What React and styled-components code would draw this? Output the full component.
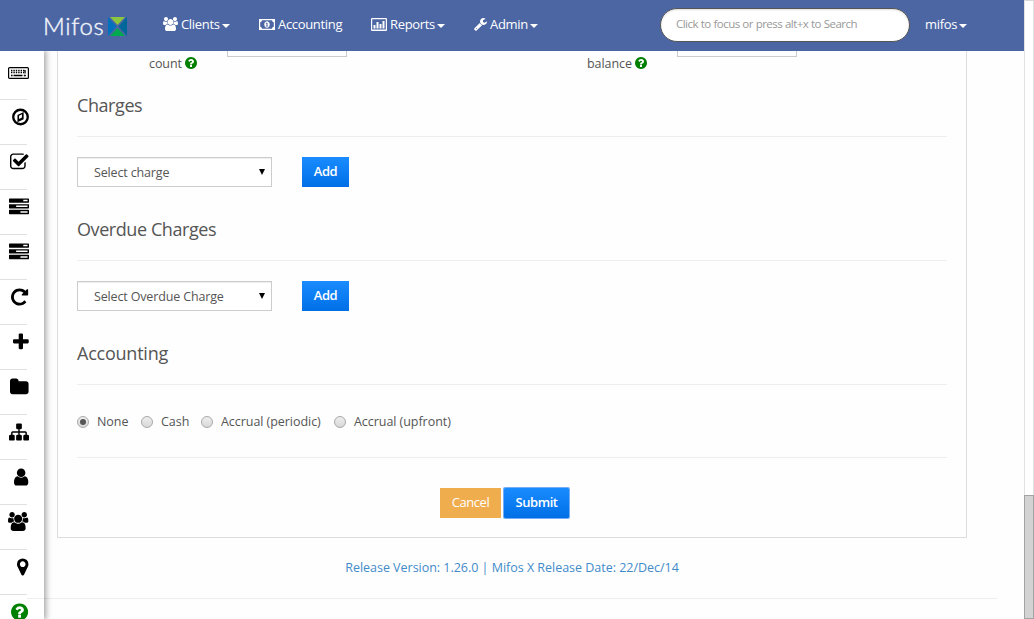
import React from "react";
import styled, { createGlobalStyle } from "styled-components";

const Global = createGlobalStyle`
  * { box-sizing: border-box; }
  body { margin: 0; background: #fefefe; overflow: hidden; }
  #root { font-family: "Open Sans", "Noto Sans", sans-serif; font-size: 12.5px; font-stretch: 88%; letter-spacing: -0.05px; color: #555; }
`;

const Page = styled.div`
  display: flex;
  width: 1034px;
  height: 619px;
  overflow: hidden;
`;
const Screen = styled.div`
  display: flex;
  flex-direction: column;
  width: 1024px;
`;
const Scrollbar = styled.div`
  display: flex;
  align-items: flex-end;
  width: 10px;
  background: #fff;
  border-left: 1px solid #e2e2e2;
  border-right: 1px solid #e2e2e2;
  border-top: 1px solid #d8d8d8;
`;
const Thumb = styled.div`
  width: 10px;
  height: 124px;
  flex: none;
  margin-left: -1px;
  background: #d3d3d3;
  border: 1px solid #a3a3a3;
`;

const Navbar = styled.header`
  display: flex;
  align-items: center;
  height: 51px;
  flex: none;
  padding-left: 44px;
  background: #4c66a4;
  color: #fff;
`;
const Brand = styled.div`
  display: flex;
  align-items: center;
  width: 119px;
  height: 51px;
  padding-top: 2px;
`;
const BrandName = styled.span`
  width: 65px;
  margin-left: -1px;
  padding-bottom: 1px;
  font: 300 24px/30px Lato, sans-serif;
  letter-spacing: 0.6px;
  color: #f1f4fa;
  -webkit-text-stroke: 0.4px #f1f4fa;
`;
const NavItem = styled.a`
  display: flex;
  align-items: center;
  width: ${(p) => p.$w}px;
  height: 51px;
  padding-bottom: 3px;
  font-size: 13px;
  white-space: nowrap;
  letter-spacing: -0.32px;
`;
const NavIcon = styled.span`
  display: flex;
  align-items: center;
  margin-right: 3px;
`;
const Caret = styled.i`
  margin: 4px 0 0 2px;
  border: 4px solid transparent;
  border-top-color: #fff;
  border-bottom: 0;
`;
const Search = styled.div`
  width: 250px;
  height: 34px;
  margin: 0 15px 1px 0;
  padding-left: 15px;
  border: 1px solid #555;
  border-radius: 17px;
  background: #fff;
  box-shadow: inset 0 1px 2px #ddd;
  color: #999;
  font-size: 11.5px;
  letter-spacing: -0.53px;
  word-spacing: 0.3px;
  line-height: 29px;
  white-space: nowrap;
`;

const Body = styled.div`
  display: flex;
  flex: 1;
  min-height: 0;
`;
const Sidebar = styled.nav`
  width: 44px;
  flex: none;
  background: #fff;
  box-shadow: 1px 0 6px 1px rgba(0, 0, 0, 0.36);
  clip-path: inset(0 -12px 0 0);
`;
const SideItem = styled.a`
  display: flex;
  align-items: center;
  justify-content: flex-end;
  width: 27px;
  height: 45px;
  padding-bottom: 11px;
  color: ${(p) => p.$color || "#000"};
  border-bottom: 1px solid #e0e0e0;
  &:first-child { height: 49px; padding-bottom: 5px; }
  svg { display: block; flex: none; margin-right: -1.5px; }
`;
const Main = styled.main`
  display: flex;
  flex-direction: column;
  width: 953px;
  padding-left: 13px;
`;
const Panel = styled.section`
  width: 910px;
  height: 487px;
  padding: 0 19px;
  border: 1px solid #ddd;
  border-top: 0;
`;
const TopRow = styled.div`
  display: flex;
  align-items: flex-start;
  height: 33px;
`;
const FieldLabel = styled.label`
  display: flex;
  align-items: center;
  justify-content: flex-end;
  gap: 3px;
  width: ${(p) => p.$w}px;
  height: 25px;
`;
const HelpMark = styled.span`
  display: flex;
  margin-bottom: 2px;
  color: #008000;
`;
const FieldInput = styled.div`
  width: 120px;
  height: 6px;
  margin-left: 30px;
  border: 1px solid #ccc;
  border-top: 0;
`;
const Heading = styled.h4`
  height: 53px;
  margin: 0;
  padding-top: 9px;
  border-bottom: 1px solid #eee;
  font-size: 18px;
  font-weight: 400;
  line-height: 24px;
  letter-spacing: ${(p) => p.$ls || -0.42}px;
`;
const ChargeRow = styled.div`
  display: flex;
  gap: 30px;
  height: 71px;
  padding-top: 20px;
`;
const Select = styled.div`
  display: flex;
  align-items: center;
  justify-content: space-between;
  width: 195px;
  height: 30px;
  padding: 0 6px 0 16px;
  border: 1px solid #ccc;
  background: #fff;
  box-shadow: inset 0 1px 1px rgba(0, 0, 0, 0.07);
  letter-spacing: -0.15px;
`;
const Arrow = styled.i`
  border: 3.5px solid transparent;
  border-top: 6px solid #000;
  border-bottom: 0;
`;
const Button = styled.button`
  width: ${(p) => p.$w}px;
  height: 30px;
  padding: 0 0 2px;
  border: 0;
  background: ${(p) => (p.$warn ? "#f0ad4e" : "linear-gradient(#1a8cff, #006fe6)")};
  box-shadow: ${(p) => (p.$focus ? "0 0 0 1px #75aef5" : "none")};
  border-radius: ${(p) => (p.$focus ? 1 : 0)}px;
  color: #fff;
  font: inherit;
  font-size: 13px;
  font-stretch: 88%;
  letter-spacing: -0.42px;
  font-weight: ${(p) => (p.$warn ? 450 : 550)};
`;
const Radios = styled.div`
  display: flex;
  align-items: center;
  height: 73px;
  border-bottom: 1px solid #eee;
`;
const RadioLabel = styled.label`
  display: flex;
  align-items: center;
  gap: 8px;
  width: ${(p) => p.$w}px;
  white-space: nowrap;
`;
const Radio = styled.i`
  display: flex;
  align-items: center;
  justify-content: center;
  width: 12px;
  height: 12px;
  margin-top: 2px;
  flex: none;
  border: 1px solid #a9a9a9;
  border-radius: 50%;
  background: linear-gradient(#eee, #d8d8d8);
  &::after {
    content: "";
    width: 6px;
    height: 6px;
    border-radius: 50%;
    background: ${(p) => (p.$on ? "#555" : "transparent")};
  }
`;
const Actions = styled.div`
  display: flex;
  gap: 3px;
  padding: 30px 0 0 363px;
`;
const Release = styled.p`
  margin: 0;
  width: 910px;
  height: 60px;
  line-height: 59px;
  text-align: center;
  letter-spacing: -0.02px;
  color: #428bca;
`;
const PageRule = styled.div`
  position: relative;
  height: 1px;
  flex: none;
  margin-left: -30px;
  background: rgba(0, 0, 0, 0.065);
`;

const paths = {
  users: "M657 896q-162 5-265 128h-134q-82 0-138-40.5t-56-118.5q0-353 124-353 6 0 43.5 21t97.5 42.5 119 21.5q67 0 133-23-5 37-5 66 0 139 81 256zm1071 637q0 120-73 189.5t-194 69.5h-874q-121 0-194-69.5t-73-189.5q0-53 3.5-103.5t14-109 26.5-108.5 43-97.5 62-81 85.5-53.5 111.5-20q10 0 43 21.5t73 48 107 48 135 21.5 135-21.5 107-48 73-48 43-21.5q61 0 111.5 20t85.5 53.5 62 81 43 97.5 26.5 108.5 14 109 3.5 103.5zm-1024-1277q0 106-75 181t-181 75-181-75-75-181 75-181 181-75 181 75 75 181zm704 384q0 159-112.5 271.5t-271.5 112.5-271.5-112.5-112.5-271.5 112.5-271.5 271.5-112.5 271.5 112.5 112.5 271.5zm576 225q0 78-56 118.5t-138 40.5h-134q-103-123-265-128 81-117 81-256 0-29-5-66 66 23 133 23 59 0 119-21.5t97.5-42.5 43.5-21q124 0 124 353zm-128-609q0 106-75 181t-181 75-181-75-75-181 75-181 181-75 181 75 75 181z",
  wrench: "M448 1472q0-26-19-45t-45-19-45 19-19 45 19 45 45 19 45-19 19-45zm644-420l-682 682q-37 37-90 37-52 0-91-37l-106-108q-38-36-38-90 0-53 38-91l681-681q39 98 114.5 173.5t173.5 114.5zm634-435q0 39-23 106-47 134-164.5 217.5t-258.5 83.5q-185 0-316.5-131.5t-131.5-316.5 131.5-316.5 316.5-131.5q58 0 121.5 16.5t107.5 46.5q16 11 16 28t-16 28l-293 169v224l193 107q5-3 79-48.5t135.5-81 70.5-35.5q15 0 23.5 10t8.5 25z",
  check: "M1472 930v318q0 119-84.5 203.5t-203.5 84.5h-832q-119 0-203.5-84.5t-84.5-203.5v-832q0-119 84.5-203.5t203.5-84.5h832q63 0 117 25 15 7 18 23 3 17-9 29l-49 49q-10 10-23 10-3 0-9-2-23-6-45-6h-832q-66 0-113 47t-47 113v832q0 66 47 113t113 47h832q66 0 113-47t47-113v-254q0-13 9-22l64-64q10-10 23-10 6 0 12 3 20 8 20 29zm231-489l-814 814q-24 24-57 24t-57-24l-430-430q-24-24-24-57t24-57l110-110q24-24 57-24t57 24l263 263 647-647q24-24 57-24t57 24l110 110q24 24 24 57t-24 57z",
  tasks: "M1024 1408h640v-128h-640v128zm-384-512h1024v-128h-1024v128zm640-512h384v-128h-384v128zm512 832v256q0 26-19 45t-45 19h-1664q-26 0-45-19t-19-45v-256q0-26 19-45t45-19h1664q26 0 45 19t19 45zm0-512v256q0 26-19 45t-45 19h-1664q-26 0-45-19t-19-45v-256q0-26 19-45t45-19h1664q26 0 45 19t19 45zm0-512v256q0 26-19 45t-45 19h-1664q-26 0-45-19t-19-45v-256q0-26 19-45t45-19h1664q26 0 45 19t19 45z",
  repeat: "M1664 256v448q0 26-19 45t-45 19h-448q-42 0-59-40-17-39 14-69l138-138q-148-137-349-137-104 0-198.5 40.5t-163.5 109.5-109.5 163.5-40.5 198.5 40.5 198.5 109.5 163.5 163.5 109.5 198.5 40.5q119 0 225-52t179-147q7-10 23-12 15 0 25 9l137 138q9 8 9.5 20.5t-7.5 22.5q-109 132-264 204.5t-327 72.5q-156 0-298-61t-245-164-164-245-61-298 61-298 164-245 245-164 298-61q147 0 284.5 55.5t244.5 156.5l130-129q29-31 70-14 39 17 39 59z",
  plus: "M1600 736v192q0 40-28 68t-68 28h-416v416q0 40-28 68t-68 28h-192q-40 0-68-28t-28-68v-416h-416q-40 0-68-28t-28-68v-192q0-40 28-68t68-28h416v-416q0-40 28-68t68-28h192q40 0 68 28t28 68v416h416q40 0 68 28t28 68z",
  folder: "M1728 608v704q0 92-66 158t-158 66h-1216q-92 0-158-66t-66-158v-960q0-92 66-158t158-66h320q92 0 158 66t66 158v32h672q92 0 158 66t66 158z",
  sitemap: "M1792 1248v320q0 40-28 68t-68 28h-320q-40 0-68-28t-28-68v-320q0-40 28-68t68-28h96v-192h-512v192h96q40 0 68 28t28 68v320q0 40-28 68t-68 28h-320q-40 0-68-28t-28-68v-320q0-40 28-68t68-28h96v-192h-512v192h96q40 0 68 28t28 68v320q0 40-28 68t-68 28h-320q-40 0-68-28t-28-68v-320q0-40 28-68t68-28h96v-192q0-52 38-90t90-38h512v-192h-96q-40 0-68-28t-28-68v-320q0-40 28-68t68-28h320q40 0 68 28t28 68v320q0 40-28 68t-68 28h-96v192h512q52 0 90 38t38 90v192h96q40 0 68 28t28 68z",
  user: "M1536 1399q0 109-62.5 187t-150.5 78h-854q-88 0-150.5-78t-62.5-187q0-85 8.5-160.5t31.5-152 58.5-131 94-89 134.5-34.5q131 128 313 128t313-128q76 0 134.5 34.5t94 89 58.5 131 31.5 152 8.5 160.5zm-256-887q0 159-112.5 271.5t-271.5 112.5-271.5-112.5-112.5-271.5 112.5-271.5 271.5-112.5 271.5 112.5 112.5 271.5z",
  marker: "M1152 640q0-106-75-181t-181-75-181 75-75 181 75 181 181 75 181-75 75-181zm256 0q0 109-33 179l-364 774q-16 33-47.5 52t-67.5 19-67.5-19-46.5-52l-365-774q-33-70-33-179 0-212 150-362t362-150 362 150 150 362z",
  help: "M1024 1376v-192q0-14-9-23t-23-9h-192q-14 0-23 9t-9 23v192q0 14 9 23t23 9h192q14 0 23-9t9-23zm256-672q0-88-55.5-163t-138.5-116-170-41q-243 0-371 213-15 24 8 42l132 100q7 6 19 6 16 0 25-12 53-68 86-92 34-24 86-24 48 0 85.5 26t37.5 59q0 38-20 61t-68 45q-63 28-115.5 86.5t-52.5 125.5v36q0 14 9 23t23 9h192q14 0 23-9t9-23q0-19 21.5-49.5t54.5-49.5q32-18 49-28.5t46-35 44.5-48 28-60.5 12.5-81zm384 192q0 209-103 385.5t-279.5 279.5-385.5 103-385.5-103-279.5-279.5-103-385.5 103-385.5 279.5-279.5 385.5-103 385.5 103 279.5 279.5 103 385.5z",
};

/* left edge and width of each glyph on its 1792-unit grid */
const extents = {
  users: [64, 1920], wrench: [64, 1664], check: [64, 1664], tasks: [0, 1792], repeat: [128, 1536],
  plus: [192, 1408], folder: [64, 1664], sitemap: [0, 1792], user: [256, 1280], marker: [384, 1024], help: [128, 1536],
};

const Glyph = ({ name, size }) => {
  const [x, w] = extents[name];
  return (
    <svg width={(w * size) / 1792} height={size} viewBox={`${x} 0 ${w} 1792`} fill="currentColor">
      <path d={paths[name]} />
    </svg>
  );
};

const Keyboard = () => (
  <svg width="21" height="12" viewBox="0 0 21 12">
    <rect x="0.6" y="0.6" width="19.8" height="10.8" rx="1" fill="#fff" stroke="#000" strokeWidth="1.2" />
    <path d="M3 3.5h14.500M3 5.500h13" stroke="#000" strokeWidth="1.3" strokeDasharray="1.400 1" />
    <path d="M3 8.500h1.600M5.500 8.500h9M15.800 8.500h2M17 3v3.500" stroke="#000" strokeWidth="1.3" />
  </svg>
);
const Compass = () => (
  <svg width="17" height="20" viewBox="128 0 1536 1792">
    <circle cx="896" cy="896" r="656" fill="none" stroke="#000" strokeWidth="210" />
    <path fillRule="evenodd" d="M768 1071l256-128v-286l-256 128zM1180 440v660l-560 270v-660z" />
  </svg>
);
const Money = () => (
  <svg width="16" height="11" viewBox="0 0 16 11" fill="#fff">
    <path fillRule="evenodd" d="M0 0h16v11H0zM3 1.2Q2.8 3 1.2 3.2v4.600Q2.800 8 3 9.800h10Q13.200 8 14.800 7.800V3.200Q13.200 3 13 1.200z" />
    <path fillRule="evenodd" d="M8 2.200a2.700 3.300 0 1 0 .01 0zM7.200 3.700h1.300v3h.7v.8H6.800v-.8h.7V4.700h-.8z" />
  </svg>
);
const BarChart = () => (
  <svg width="16" height="13" viewBox="0 0 16 13" fill="#fff">
    <path fillRule="evenodd" d="M.8 0h14.400L16 .8v11.400l-.8.8H.8L0 12.200V.8zM1.200 1.200v10.300h13.600V1.200z" />
    <path d="M2.500 7h2v3.500h-2zM5.500 4h2v6.500h-2zM8.500 6h2v4.500h-2zM11.500 3h2v7.500h-2z" />
  </svg>
);
const BrandMark = () => (
  <svg width="19" height="19" viewBox="0 0 19 19">
    <path d="M0 0v19L8.500 9.500z" fill="#0071bc" />
    <path d="M19 0v19L10.500 9.500z" fill="#00679a" />
    <path d="M2 0h15L9.500 8z" fill="#8cc63f" />
    <path d="M2 19h15L9.500 11z" fill="#00a84f" />
  </svg>
);

const menu = [
  { icon: <Keyboard /> },
  { icon: <Compass /> },
  { icon: <Glyph name="check" size={20} /> },
  { icon: <Glyph name="tasks" size={20} /> },
  { icon: <Glyph name="tasks" size={20} /> },
  { icon: <Glyph name="repeat" size={20} /> },
  { icon: <Glyph name="plus" size={20} /> },
  { icon: <Glyph name="folder" size={20} /> },
  { icon: <Glyph name="sitemap" size={20} /> },
  { icon: <Glyph name="user" size={20} /> },
  { icon: <Glyph name="users" size={19} /> },
  { icon: <Glyph name="marker" size={20} /> },
  { icon: <Glyph name="help" size={20} />, color: "#008000" },
];

const HelpDot = () => <HelpMark><Glyph name="help" size={14} /></HelpMark>;

const ChargeSection = ({ title, placeholder }) => (
  <>
    <Heading>{title}</Heading>
    <ChargeRow>
      <Select>{placeholder}<Arrow /></Select>
      <Button $w={47}>Add</Button>
    </ChargeRow>
  </>
);

export default function App() {
  return (
    <Page>
      <Global />
      <Screen>
        <Navbar>
          <Brand><BrandName>Mifos</BrandName><BrandMark /></Brand>
          <NavItem $w={96}><NavIcon><Glyph name="users" size={14} /></NavIcon>Clients<Caret /></NavItem>
          <NavItem $w={112}><NavIcon><Money /></NavIcon>Accounting</NavItem>
          <NavItem $w={103}><NavIcon><BarChart /></NavIcon>Reports<Caret /></NavItem>
          <NavItem $w={186}><NavIcon><Glyph name="wrench" size={14} /></NavIcon>Admin<Caret /></NavItem>
          <Search>Click to focus or press alt+x to Search</Search>
          <NavItem $w={60}>mifos<Caret /></NavItem>
        </Navbar>
        <Body>
          <Sidebar>
            {menu.map((m, i) => <SideItem key={i} $color={m.color}>{m.icon}</SideItem>)}
          </Sidebar>
          <Main>
            <Panel>
              <TopRow>
                <FieldLabel $w={120}>count <HelpDot /></FieldLabel>
                <FieldInput />
                <FieldLabel $w={300}>balance <HelpDot /></FieldLabel>
                <FieldInput />
              </TopRow>
              <ChargeSection title="Charges" placeholder="Select charge" />
              <ChargeSection title="Overdue Charges" placeholder="Select Overdue Charge" />
              <Heading $ls={-0.23}>Accounting</Heading>
              <Radios>
                <RadioLabel $w={64}><Radio $on />None</RadioLabel>
                <RadioLabel $w={60}><Radio />Cash</RadioLabel>
                <RadioLabel $w={133}><Radio />Accrual (periodic)</RadioLabel>
                <RadioLabel $w={130}><Radio />Accrual (upfront)</RadioLabel>
              </Radios>
              <Actions>
                <Button $w={61} $warn>Cancel</Button>
                <Button $w={65} $focus>Submit</Button>
              </Actions>
            </Panel>
            <Release>Release Version: 1.26.0 | Mifos X Release Date: 22/Dec/14</Release>
            <PageRule />
          </Main>
        </Body>
      </Screen>
      <Scrollbar><Thumb /></Scrollbar>
    </Page>
  );
}
